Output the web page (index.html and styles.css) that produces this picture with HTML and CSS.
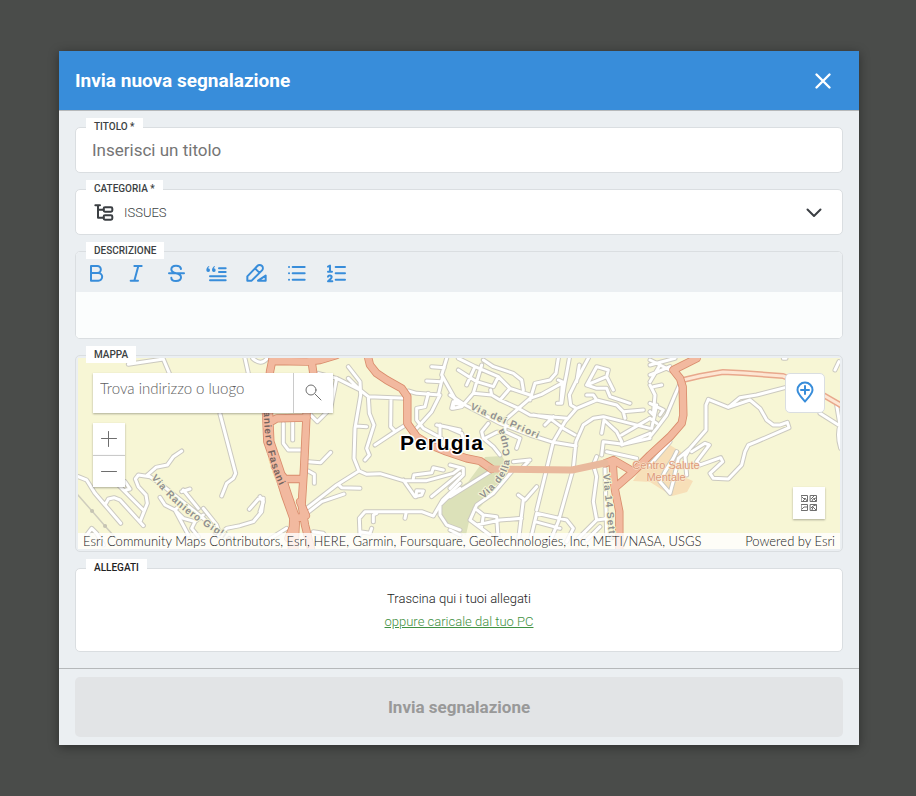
FILE: index.html
```html
<!DOCTYPE html>
<html lang="it">
<head>
<meta charset="utf-8">
<title>Invia nuova segnalazione</title>
<meta name="viewport" content="width=device-width, initial-scale=1">
<link rel="stylesheet" href="styles.css">
</head>
<body>
<form class="dialog" role="dialog" aria-labelledby="dialog-title">
  <header class="dialog-header">
    <h1 id="dialog-title">Invia nuova segnalazione</h1>
    <button type="button" class="close" aria-label="Chiudi">
      <svg viewBox="0 0 24 24"><path d="M5.500 5.500l13 13M18.500 5.500l-13 13"/></svg>
    </button>
  </header>

  <main class="dialog-body">
    <div class="field">
      <label class="tag" for="titolo">TITOLO *</label>
      <input class="title-input" id="titolo" type="text" placeholder="Inserisci un titolo">
    </div>

    <div class="field category">
      <label class="tag" for="categoria">CATEGORIA *</label>
      <svg class="tree" viewBox="127 482 72 72"><path d="M137 498h14M145 498v37h17M145 511h17"/><rect x="162" y="504" width="26" height="13" rx="4"/><rect x="162" y="528" width="26" height="13" rx="4"/></svg>
      <select id="categoria"><option>ISSUES</option></select>
      <svg class="chevron" viewBox="0 0 24 24"><path d="M5.500 9.500l6.500 6.500 6.500-6.500"/></svg>
    </div>

    <div class="field editor">
      <label class="tag" for="descrizione">DESCRIZIONE</label>
      <div class="toolbar">
        <button type="button" aria-label="Grassetto"><svg viewBox="42 75 72 72"><path d="M63 90h19a10 10 0 0 1 0 21h-19zM63 111h22a11 11 0 0 1 0 23h-22z"/></svg></button>
        <button type="button" aria-label="Corsivo"><svg viewBox="162 75 72 72"><path d="M193 90h22M182 134h22M205 90l-12 44"/></svg></button>
        <button type="button" aria-label="Barrato"><svg viewBox="282 75 72 72"><path d="M333 99C332 92 326 89 318 89C309 89 304 94 304 100C304 107 310 110 318 112C329 114 333 118 333 124C333 131 326 135 318 135C310 135 304 131 304 125M297 112h45"/></svg></button>
        <button type="button" aria-label="Citazione"><svg viewBox="402 75 72 72"><path d="M447 97h20M447 108h20M420 121h47M420 133h47"/><path class="solid" d="M417 90c-6 3-8 8-8 13a5.500 5.500 0 1 0 5-6c0-2 2-3 4-4zM434 90c-6 3-8 8-8 13a5.500 5.500 0 1 0 5-6c0-2 2-3 4-4z"/></svg></button>
        <button type="button" aria-label="Evidenzia"><svg viewBox="522 75 72 72"><path d="M532 134v-13l30-31a9 9 0 0 1 14 13l-31 31zM555 97l13 13M564 134l23-15v15z"/></svg></button>
        <button type="button" aria-label="Elenco puntato"><svg viewBox="642 75 72 72"><path d="M668 93h36M668 112h36M668 131h36M657 93h.1M657 112h.1M657 131h.1"/></svg></button>
        <button type="button" aria-label="Elenco numerato"><svg viewBox="762 75 72 72"><path d="M797 93h28M797 112h28M797 131h28M774 92l6-3v17M774 107h12M774 122c1-5 11-5 11 1c0 5-7 8-11 13h13"/></svg></button>
      </div>
      <textarea id="descrizione"></textarea>
    </div>

    <section class="field map-field" aria-labelledby="mappa">
      <span class="tag" id="mappa">MAPPA</span>
      <div class="map">
        <svg class="map-art" viewBox="78 358 762 191" preserveAspectRatio="xMidYMid slice">
          <defs>
            <g id="minor">
              <g transform="translate(70 345) scale(.33333)">
                <path d="M175 58L280 42L298 85M525 40L535 85M548 40Q572 62 590 42M450 207L497 385L490 400L470 415L455 453M335 318L310 335L292 360L258 367L232 390M25 395L50 405L75 445L105 480L152 535M105 480L115 462L132 458L150 465L220 542M240 395L205 390L196 402L205 425L228 450L232 475L210 530M165 410L180 432L168 435M145 420L220 495M232 390L270 415L400 520L460 575M270 457L285 480L315 495L340 520L375 530M315 495L330 480M315 495L355 570M340 435L385 490M335 440L360 432M375 530L365 550L385 575M400 490L440 540L450 570M538 493L565 462L580 460L575 500L550 530L510 542L470 550L440 575M50 570L65 550L80 565L100 600M375 530L400 510"/>
              </g>
              <g transform="translate(260 345) scale(.33333)">
                <path d="M175 85L230 100L300 135L325 155L440 160M265 65L300 110L302 150L285 250L282 340L297 378M265 100L300 135M230 100L212 190L172 230L150 208M288 243L320 245M325 155L328 205L342 240L320 310L328 330L315 345M393 160L392 245L405 258M345 300L405 260L445 235M445 138L470 145L540 150L515 200L470 250M505 145L495 185L470 190L470 225L490 250L545 280M560 40L545 90L590 170M515 65L553 68M500 108L545 110M535 150L548 95M575 190L580 170L600 178M530 240L600 255M540 240L540 280M70 235L70 295L85 315L130 315M98 215L98 285M145 350L182 353L212 322M145 378L163 388L163 415M140 490L230 420L297 378L320 388L360 386L430 407L500 407L580 385L600 370M140 505L185 470L252 447M235 418L245 428L300 430M460 400L462 390L515 383L520 368L550 375M430 405L465 455L485 450L490 438L470 437L468 455M515 455L600 385M548 465L600 415M300 570L298 520L315 500L485 500L520 513L545 470M435 520L438 505M340 530L340 510L350 505M600 555L560 540L540 510L540 480L560 460L600 430M0 500L10 470L0 455M300 560L330 565L335 550M160 560L190 565L210 590M0 600L80 550"/>
              </g>
              <g transform="translate(450 345) scale(.33333)">
                <path d="M25 40L75 65L145 95L130 125L80 110L25 75M100 45L130 65L190 85L215 105L220 135M75 65L50 120M95 60L70 145L35 185L10 190L10 175L30 178M0 150L45 180L150 235L240 270L310 292L378 303M70 145L125 150L122 135M125 150L150 165L205 190L240 210L350 220M145 95L180 130L240 150M180 130L150 165M165 225L240 160L275 148L340 112L325 105M337 112L333 175M325 40L318 85L300 105L255 115L240 165M358 40L350 85L343 120L335 175L322 175M415 40L385 95L358 150L362 180L378 190M388 60L380 110M165 225L165 260L210 280L200 310M250 210L300 220L340 250L375 270M285 240L310 215M260 495L310 290L345 230L380 190L440 165L500 180L520 200L580 195M325 530L370 370L378 290L400 240L430 220L460 215L540 235L600 250M325 530L300 590M410 120L440 65L475 75L470 95L410 120L440 130L470 130L480 155L540 175M410 150L430 150L440 165M520 200L525 220M470 95L490 135M515 270L600 220M455 265L462 225L500 260L515 290M515 300L600 265M455 330L460 290L520 298L600 280M470 320L560 340M115 235L95 260L100 280L130 305L150 330M105 280L140 262L165 260M0 250L35 265L40 280M0 360L40 370L40 390L0 430M0 455L120 380M190 350L240 345M220 365L235 350M185 380L130 445L80 480L60 525L80 540L150 525L215 520M205 450L225 465L260 425M220 465L205 590M75 490L100 510L95 545M100 510L140 515L145 590M0 555L30 570M240 590L260 505L350 525L370 550L350 590M255 530L330 550M60 525L120 570M440 335L430 360L440 395L430 470L440 525L385 580M465 370L470 570M440 525L480 520M450 545L410 585"/>
              </g>
              <g transform="translate(650 345) scale(.33333)">
                <path d="M405 128L320 150L270 158L235 187L175 163L168 180L168 255L120 310L105 335L110 390M235 187L300 165L330 190L350 225L370 240L390 240L412 232L417 248L320 290L295 300L285 320L275 360L235 402L190 400L180 385L218 350L212 338L150 360L140 350L178 300L165 295L125 320M60 445L72 400L85 340L120 310M60 445L30 410L45 380L70 340L80 320M510 205L570 243M560 180L570 240Q560 270 572 310M555 75L567 50M95 105L75 150L50 210L20 250L0 275M0 45L60 75M0 90L60 65M0 60L75 40M0 120L15 150L10 210L0 200M10 125L35 120M0 175L40 195L30 210M0 220L20 235M20 180L5 250M30 60L0 110M0 360L60 290M400 40h8"/>
              </g>
            </g>
            <g id="major">
              <g transform="translate(260 345) scale(.33333)">
                <path d="M325 40L330 60L350 85L380 105L425 130L442 155L442 235L470 275L510 300L560 320L620 340L660 348L695 372"/>
                <path d="M40 30L30 80L18 200L22 290L50 370L75 450L100 520L95 620M27 200L31 290L58 370L84 450L108 520L103 620M40 48L140 50L180 45L230 30M155 50L160 85L148 110L140 200L132 370L125 480L135 540L155 620M25 235L50 220L140 218M45 365L75 402L130 402M120 470L138 512L110 520L85 580"/>
              </g>
              <g transform="translate(650 345) scale(.33333)">
                <path d="M-135 355L-110 345L-50 380L0 330L60 275L95 235L100 210L98 125L90 100L70 75L140 40M-112 350L-108 420L-92 500L-92 620M-50 380L-105 428"/>
              </g>
            </g>
            <path id="secondary" d="M683 380L700 376L723 372L743 373L783 376L806 385L842 406"/>
            <path id="giglia" d="M151 478Q172 503 190 516T252 556"/>
            <path id="fasani" d="M264 403Q263 434 270 460T292 508"/>
            <path id="priori" d="M470 409Q500 422 550 444"/>
            <path id="cupa" d="M483 499Q506 480 509 465T500 420"/>
            <path id="sette" d="M603 474L614 590"/>
          </defs>
          <rect class="land" x="78" y="358" width="762" height="191"/>
          <path class="park" d="M502 456L485 457L482 463L468 482L449 493L440 505L440 517L447 526L466 535L470 517L482 505L492 488L512 474Z"/>
          <path class="hospital" d="M633 481L645 462L670 445L681 452L677 474L693 481L687 492L672 496L650 482Z"/>
          <path class="rail" d="M78 495L92 511L105 526L122 545"/>
          <path class="rail-dots" d="M92 511h.1M105 526h.1"/>
          <use href="#minor" class="minor-case"/>
          <use href="#minor" class="minor-fill"/>
          <use href="#secondary" class="second-case"/>
          <use href="#secondary" class="second-fill"/>
          <use href="#major" class="major-case"/>
          <use href="#major" class="major-fill"/>
          <path class="tunnel" d="M491 469L572 470L605 463"/>
          <g class="street">
            <text><textPath href="#giglia">Via Raniero Giglia</textPath></text>
            <text class="dark"><textPath href="#fasani">Raniero Fasani</textPath></text>
            <text><textPath href="#priori">Via dei Priori</textPath></text>
            <text><textPath href="#cupa">Via della Cupa</textPath></text>
            <text><textPath href="#sette">Via 14 Sette</textPath></text>
          </g>
          <g class="poi"><text x="666" y="469">Centro Salute</text><text x="666" y="481">Mentale</text></g>
          <text class="city" x="442" y="450">Perugia</text>
        </svg>
        <div class="search">
          <input type="search" aria-label="Trova indirizzo o luogo" placeholder="Trova indirizzo o luogo">
          <button type="button" aria-label="Cerca"><svg viewBox="0 0 18 18"><circle cx="6" cy="6" r="5"/><path d="M10 10l6 6"/></svg></button>
        </div>
        <div class="zoom">
          <button type="button" aria-label="Ingrandisci"><svg viewBox="0 0 16 16"><path d="M.5 7.500h15M7.500.5v15"/></svg></button>
          <button type="button" aria-label="Riduci"><svg viewBox="0 0 16 16"><path d="M.5 7.500h15"/></svg></button>
        </div>
        <button type="button" class="pin" aria-label="Aggiungi posizione"><svg viewBox="0 0 20 24"><path d="M10 20.500C6 16 2.500 12.500 2.500 9a7.500 7.500 0 0 1 15 0C17.500 12.500 14 16 10 20.500zM10 5v8M6 9h8"/></svg></button>
        <button type="button" class="basemap" aria-label="Mappa di base"><svg viewBox="0 0 16 16"><path d="M.5.5h6v6h-6zM9.500.5h6v6h-6zM.5 9.500h6v6h-6zM9.500 9.500h6v6h-6zM1 2l2 2 1-1 2 3M2 6l2-2M10 4l3-3M11 6l1-2 3-1M13 4l2 2M1 14l2-2h3M10 13l2-2 3-1M11 15l1-3 3 3"/></svg></button>
        <div class="credits"><span>Esri Community Maps Contributors, Esri, HERE, Garmin, Foursquare, GeoTechnologies, Inc, METI/NASA, USGS</span><span>Powered by Esri</span></div>
      </div>
    </section>

    <section class="field attachments" aria-labelledby="allegati">
      <span class="tag" id="allegati">ALLEGATI</span>
      <p>Trascina qui i tuoi allegati</p>
      <a href="#">oppure caricale dal tuo PC</a>
    </section>
  </main>

  <footer class="dialog-footer">
    <button type="submit" disabled>Invia segnalazione</button>
  </footer>
</form>
</body>
</html>
```
FILE: styles.css
```css
* { box-sizing: border-box; }

body {
  margin: 0;
  min-height: 100vh;
  padding: 51px 57px 51px 59px;
  background: #4a4c4a;
  color: #3b3f43;
  font-family: Roboto, "Liberation Sans", sans-serif;
  font-size: 13px;
}

button, input, select, textarea { font: inherit; color: inherit; border: 0; margin: 0; padding: 0; background: none; outline: 0; }
button { display: flex; align-items: center; justify-content: center; }
svg { display: block; fill: none; stroke: currentColor; stroke-linecap: round; stroke-linejoin: round; }

.dialog { background: #ebeff2; box-shadow: 0 2px 10px rgba(0, 0, 0, .4); }

.dialog-header {
  display: flex;
  align-items: center;
  justify-content: space-between;
  height: 60px;
  padding: 0 24px 0 16px;
  background: #388dda;
  border-bottom: 1px solid #b5b8ba;
  color: #fff;
}
.dialog-header h1 { margin: 0; font-size: 19px; font-weight: 700; }
.close svg { width: 24px; height: 24px; stroke-width: 2.400; }

.dialog-body { display: flex; flex-direction: column; gap: 16px; padding: 16px; }

.field { position: relative; background: #fff; border: 1px solid #dadee1; border-radius: 5px; }
.tag {
  position: absolute;
  z-index: 1;
  top: -10px;
  left: 10px;
  padding: 0 8px;
  background: #fff;
  font-size: 10px;
  font-weight: 500;
  line-height: 17px;
}

.title-input { display: block; width: 100%; height: 44px; padding: 0 16px; font-size: 17px; }
.title-input::placeholder { color: #757575; font-weight: 400; opacity: 1; }

.category { display: flex; align-items: center; }
.category select { appearance: none; width: 100%; height: 44px; padding: 0 48px; font-weight: 300; }
.tree, .chevron { position: absolute; width: 24px; height: 24px; pointer-events: none; }
.tree { left: 16px; stroke-width: 6; }
.chevron { right: 16px; stroke-width: 2; }

.toolbar { display: flex; height: 40px; padding-bottom: 2px; background: #ebeff2; border-radius: 4px 4px 0 0; color: #388dda; }
.toolbar button { width: 40px; padding-top: 4px; }
.toolbar svg { width: 24px; height: 24px; stroke-width: 6; }
.toolbar .solid { fill: currentColor; stroke: none; }
.editor textarea { display: block; width: 100%; height: 46px; padding: 8px 16px; background: #fbfdfd; border-radius: 0 0 4px 4px; resize: none; }

.map-field { padding: 2px; background: #ebeff2; }
.map { position: relative; height: 191px; overflow: hidden; color: #6e6e6e; font-family: Lato, "Open Sans", sans-serif; }
.map button, .search { background: #fff; box-shadow: 0 1px 2px rgba(0, 0, 0, .3); }
.map-art { width: 100%; height: 100%; }
.map-art text { stroke: none; font-family: "Liberation Sans", Arial, sans-serif; font-weight: 700; }
.land { fill: #f7f6d5; stroke: none; }
.park { fill: #dce1b9; stroke: none; }
.hospital { fill: #f7dfb8; stroke: none; }
.rail { stroke: #cfcdbd; stroke-width: 1.500; }
.rail-dots { stroke: #c6c4b4; stroke-width: 4; }
.minor-case { stroke: #cbc9c0; stroke-width: 15; }
.minor-fill { stroke: #fff; stroke-width: 9; }
.second-case { stroke: #e8a88c; stroke-width: 6; }
.second-fill { stroke: #fde6d3; stroke-width: 3; }
.major-case { stroke: #d98c6c; stroke-width: 25; }
.major-fill { stroke: #f2b99f; stroke-width: 20; }
.tunnel { stroke: #e9b99d; stroke-width: 7; }
.street { font-size: 10px; letter-spacing: 1px; }
.map-art .street text { fill: #909090; stroke: #f7f6d5; stroke-width: 2; paint-order: stroke; }
.map-art .street .dark { fill: #76655e; stroke: #f2b99f; }
.poi { font-size: 11px; text-anchor: middle; }
.map-art .poi text { fill: #dc9a7b; font-weight: 400; stroke: #fbe8cf; stroke-width: 1; paint-order: stroke; }
.map-art .city { fill: #000; stroke: #fff; stroke-width: 3; paint-order: stroke; font-size: 21px; letter-spacing: 1px; text-anchor: middle; }

.search { position: absolute; top: 15px; left: 15px; display: flex; width: 240px; height: 40px; }
.search input { flex: 1; min-width: 0; padding: 0 7px 10px; font-size: 15px; font-weight: 300; appearance: none; }
.search input::placeholder { color: #5e5e5e; opacity: 1; }
.search button { width: 40px; border-left: 1px solid #cacaca; box-shadow: none; }
.search svg { width: 18px; height: 18px; }
.zoom { position: absolute; top: 65px; left: 15px; }
.zoom button { width: 32px; height: 32px; }
.zoom button + button { border-top: 1px solid #cacaca; }
.zoom svg, .basemap svg { width: 16px; height: 16px; }
.map .pin { position: absolute; top: 15px; right: 15px; width: 40px; height: 40px; border: 1px solid #dadee1; border-radius: 5px; box-shadow: none; color: #388dda; }
.pin svg { width: 20px; height: 24px; stroke-width: 2; }
.basemap { position: absolute; right: 15px; bottom: 30px; width: 32px; height: 32px; }
.credits {
  position: absolute;
  right: 0;
  bottom: 0;
  left: 0;
  display: flex;
  justify-content: space-between;
  padding: 0 5px;
  background: rgba(255, 255, 255, .8);
  color: #222;
  font-size: 13px;
  font-weight: 300;
  line-height: 16px;
  white-space: nowrap;
}

.attachments { display: flex; flex-direction: column; align-items: center; padding: 18px 16px; line-height: 23px; font-weight: 300; color: #222; }
.attachments p { margin: 0; }
.attachments a { color: #3f9142; }

.dialog-footer { padding: 8px 16px; border-top: 1px solid #b5b8ba; }
.dialog-footer button { width: 100%; height: 60px; border-radius: 5px; background: #e2e4e6; color: #999; font-size: 17px; font-weight: 700; }
```
